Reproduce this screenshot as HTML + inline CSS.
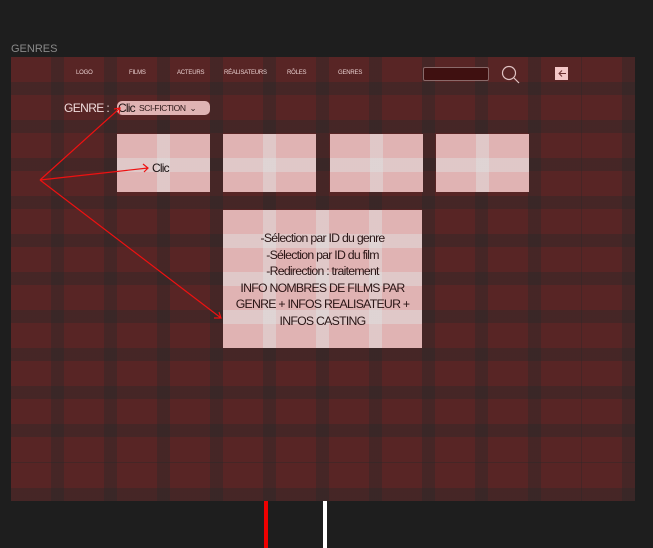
<!DOCTYPE html>
<html><head><meta charset="utf-8"><style>
body{margin:0;width:653px;height:548px;background:#1e1e1e;position:relative;overflow:hidden;font-family:"Liberation Sans",sans-serif;}
.t{position:absolute;left:11px;top:43px;color:#8a8a8a;font-size:11px;}
.frame{position:absolute;left:11px;top:57px;width:624px;height:444px;background-color:#582525;
background-image:repeating-linear-gradient(90deg,transparent 0 40px,rgba(38,40,40,.38) 40px 53px),repeating-linear-gradient(180deg,transparent 0 25px,rgba(38,40,40,.38) 25px 38px);
background-position:-53px 0,0 -38px;}
.card{position:absolute;background-color:#e0b3b3;
background-image:repeating-linear-gradient(90deg,transparent 0 40px,rgba(222,222,222,.5) 40px 53px,transparent 53px 53px),repeating-linear-gradient(180deg,transparent 0 24px,rgba(222,222,222,.5) 24px 38px);
background-size:53px 100%,100% 38px;}
.nav{position:absolute;top:70px;color:#e9cfcf;font-size:6px;letter-spacing:-.2px;}
.lines{position:absolute;top:501px;width:4px;height:47px;}
</style></head><body>
<div class="t">GENRES</div>
<div class="frame"></div>
<div class="nav" style="left:76px">LOGO</div>
<div class="nav" style="left:129px">FILMS</div>
<div class="nav" style="left:177px">ACTEURS</div>
<div class="nav" style="left:224px">RÉALISATEURS</div>
<div class="nav" style="left:287px">RÔLES</div>
<div class="nav" style="left:338px">GENRES</div>
<div style="position:absolute;left:423px;top:67px;width:64px;height:12px;background:#3f1010;border:1px solid #8a6a6a;border-radius:2px"></div>
<svg style="position:absolute;left:500px;top:64px" width="22" height="22"><circle cx="9" cy="9" r="6.5" fill="none" stroke="#e0c4c4" stroke-width="1.2"/><line x1="14" y1="14" x2="19" y2="19" stroke="#e0c4c4" stroke-width="1.2"/></svg>
<svg style="position:absolute;left:554px;top:66px" width="16" height="16"><rect x="1" y="1" width="13" height="13" fill="#f4c8c8"/><path d="M12 7.5H5M8 4.5L5 7.5 8 10.5" stroke="#6a3030" fill="none" stroke-width="1"/></svg>
<div style="position:absolute;left:64px;top:101px;color:#f0dcdc;font-size:12px;letter-spacing:-.6px">GENRE :</div>
<div style="position:absolute;left:117px;top:101px;width:93px;height:14px;background:#e0b3b3;border-radius:5px"></div>
<div style="position:absolute;left:118px;top:101px;color:#1a1010;font-size:12px;letter-spacing:-.8px">Clic</div>
<div style="position:absolute;left:139px;top:103px;color:#2a1515;font-size:8.5px;letter-spacing:-.4px">SCI-FICTION &nbsp;⌄</div>
<div class="card" style="left:117px;top:134px;width:93px;height:58px"></div>
<div class="card" style="left:223px;top:134px;width:93px;height:58px"></div>
<div class="card" style="left:330px;top:134px;width:93px;height:58px"></div>
<div class="card" style="left:436px;top:134px;width:93px;height:58px"></div>
<div style="position:absolute;left:152px;top:161px;color:#1a1010;font-size:12px;letter-spacing:-.8px">Clic</div>
<div class="card" style="left:223px;top:210px;width:199px;height:138px"></div>
<div style="position:absolute;left:223px;top:230px;width:199px;text-align:center;color:#2a1515;font-size:12.3px;line-height:16.5px;letter-spacing:-.75px">-Sélection par ID du genre<br>-Sélection par ID du film<br>-Redirection : traitement<br>INFO NOMBRES DE FILMS PAR<br>GENRE + INFOS REALISATEUR +<br>INFOS CASTING</div>
<svg style="position:absolute;left:0;top:0" width="653" height="548">
<g stroke="#ee1111" stroke-width="1.2" fill="none">
<path d="M40 180L120 108M114 109L120 108 119 114"/>
<path d="M40 180L148 168M143 164L148 168 144 172"/>
<path d="M40 180L221 318M214 318L221 318 219 312"/>
</g></svg>
<div class="lines" style="left:264px;background:#e00"></div>
<div class="lines" style="left:323px;background:#fff"></div>
</body></html>
